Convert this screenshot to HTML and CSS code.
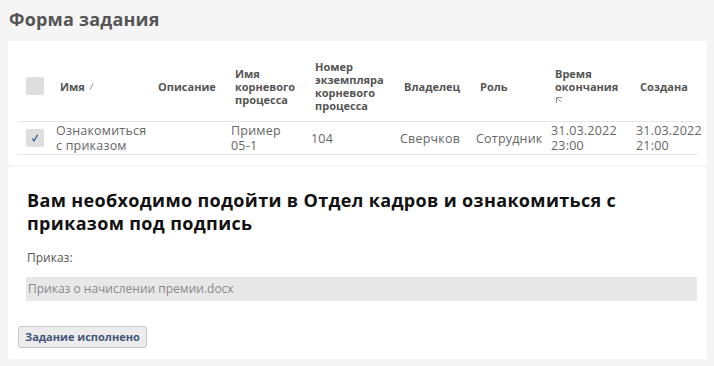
FILE: index.html
```html
<!DOCTYPE html>
<html lang="ru">
<head>
<meta charset="utf-8">
<link rel="stylesheet" href="styles.css">
</head>
<body>
<div class="page">
  <h1 class="page-title">Форма задания</h1>
  <section class="card card-table">
    <table class="grid">
      <colgroup>
        <col class="c-check"><col class="c-name"><col class="c-desc"><col class="c-root"><col class="c-num"><col class="c-owner"><col class="c-role"><col class="c-end"><col class="c-created">
      </colgroup>
      <thead>
        <tr>
          <th class="cell-check"><span class="box"></span></th>
          <th>Имя <svg class="sort" width="5" height="7" viewBox="0 0 5 7"><path d="M1 6.5L4 0.5" stroke="#999" stroke-width="1" fill="none"/></svg></th>
          <th>Описание</th>
          <th>Имя корневого процесса</th>
          <th>Номер экземпляра корневого процесса</th>
          <th>Владелец</th>
          <th>Роль</th>
          <th>Время окончания<br><svg class="sort2" width="9" height="8" viewBox="0 0 9 8"><path d="M1.5 7V1.5H7M1.5 1.5L6 6" stroke="#999" stroke-width="1" fill="none"/></svg></th>
          <th>Создана</th>
        </tr>
      </thead>
      <tbody>
        <tr>
          <td class="cell-check"><span class="box checked"><svg width="10" height="10" viewBox="0 0 10 10"><path d="M2.3 5.6L4 8L7.6 1.8" stroke="#2f4fa0" stroke-width="1.2" fill="none"/></svg></span></td>
          <td>Ознакомиться с приказом</td>
          <td></td>
          <td class="cell-root">Пример 05-1</td>
          <td>104</td>
          <td>Сверчков</td>
          <td>Сотрудник</td>
          <td>31.03.2022 23:00</td>
          <td>31.03.2022 21:00</td>
        </tr>
      </tbody>
    </table>
  </section>
  <section class="card card-form">
    <h2 class="task-title">Вам необходимо подойти в Отдел кадров и ознакомиться с приказом под подпись</h2>
    <div class="field">
      <div class="field-label">Приказ:</div>
      <div class="field-value">Приказ о начислении премии.docx</div>
    </div>
    <button class="btn" type="button">Задание исполнено</button>
  </section>
</div>
</body>
</html>
```
FILE: styles.css
```css
html, body {
  margin: 0;
  padding: 0;
  background: #f5f5f5;
}
body {
  font-family: "Open Sans", "Liberation Sans", sans-serif;
  color: #555;
}
.page {
  padding: 8px 7px 0 8px;
  display: flex;
  flex-direction: column;
}
.page-title {
  margin: 0 0 10px 1px;
  font-size: 18px;
  line-height: 23px;
  font-weight: 700;
  color: #555;
  letter-spacing: 0.2px;
}
.card {
  background: #fff;
  border-radius: 2px;
}
.card-table {
  padding: 10px 9px 10px 10px;
}
.grid {
  width: 100%;
  table-layout: fixed;
  border-collapse: collapse;
}
.c-check { width: 34px; }
.c-name { width: 98px; }
.c-desc { width: 77px; }
.c-root { width: 80px; }
.c-num { width: 89px; }
.c-owner { width: 76px; }
.c-role { width: 75px; }
.c-end { width: 85px; }
.c-created { width: auto; }
.grid th {
  text-align: left;
  font-size: 11px;
  line-height: 13px;
  font-weight: 700;
  color: #555;
  padding: 4px 2px 4px 8px;
  height: 62px;
  vertical-align: middle;
  border-bottom: 1px solid #e6e6e6;
}
.grid td {
  font-size: 12.5px;
  line-height: 15px;
  letter-spacing: 0.2px;
  color: #666;
  padding: 1px 2px 1px 4px;
  vertical-align: middle;
  border-bottom: 1px solid #e6e6e6;
  height: 30px;
}
.grid .cell-root {
  padding-right: 14px;
}
.grid .cell-check {
  padding-left: 8px;
}
.box {
  display: flex;
  align-items: center;
  justify-content: center;
  width: 18px;
  height: 18px;
  background: #dedede;
  border-radius: 2px;
}
.sort {
  vertical-align: 1px;
  margin-left: 1px;
}
.sort2 {
  margin-top: 2px;
}
.card-form {
  margin-top: 2px;
  padding: 22px 10px 10px 10px;
  min-height: 192px;
  box-sizing: border-box;
  border-radius: 3px;
}
.task-title {
  margin: 0 0 0 9px;
  font-size: 18px;
  line-height: 23px;
  font-weight: 700;
  color: #111;
  letter-spacing: 0.35px;
  max-width: 620px;
}
.field {
  margin: 15px 0 0 8px;
}
.field-label {
  font-size: 12px;
  line-height: 16px;
  color: #555;
  margin-left: 1px;
}
.field-value {
  margin-top: 11px;
  background: #e8e8e8;
  height: 24px;
  line-height: 24px;
  font-size: 12px;
  color: #888;
  padding-left: 2px;
}
.btn {
  margin-top: 25px;
  align-self: flex-start;
  font-family: "Open Sans", "Liberation Sans", sans-serif;
  font-size: 11px;
  font-weight: 700;
  color: #44557a;
  background: #ececec;
  border: 1px solid #c8c8c8;
  border-radius: 3px;
  padding: 3px 6px;
  line-height: 14px;
}
```
